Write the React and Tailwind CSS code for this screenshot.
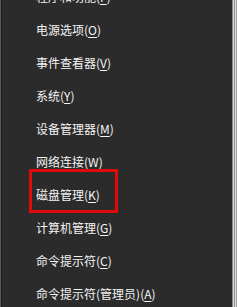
export default function App() {
  const items = [
    ["程序和功能", "F"],
    ["电源选项", "O"],
    ["事件查看器", "V"],
    ["系统", "Y"],
    ["设备管理器", "M"],
    ["网络连接", "W"],
    ["磁盘管理", "K"],
    ["计算机管理", "G"],
    ["命令提示符", "C"],
    ["命令提示符(管理员)", "A"],
  ];
  return (
    <div
      className="flex h-[307px] w-[237px] overflow-hidden"
      style={{ fontFamily: '"Noto Sans CJK SC", "Noto Sans", sans-serif' }}
    >
      <div className="w-[1px] bg-[#5a5a5a]" />
      <div className="w-[1px] bg-[#1c1c1c]" />
      <div className="flex-1 bg-[#2b2b2b] overflow-hidden">
        <div className="mt-[-20px] flex flex-col">
          {items.map(([label, key]) => (
            <div
              key={label + key}
              className="relative flex h-[33px] items-center pl-[34px] text-[12px] leading-none text-[#f4f4f4]"
            >
              <span>
                {label}(<span className="underline underline-offset-2">{key}</span>)
              </span>
              {key === "K" && (
                <div className="pointer-events-none absolute left-[27px] top-[-9px] h-[44px] w-[89px] border-[3px] border-[#e10a0a]" />
              )}
            </div>
          ))}
        </div>
      </div>
      <div className="w-[1px] bg-[#8c8c8c]" />
      <div className="w-[1px] bg-[#d8d8d8]" />
      <div className="w-[1px] bg-[#8f8f8f]" />
      <div className="w-[1px] bg-[#e2e2e2]" />
      <div className="w-[1px] bg-[#a0a0a0]" />
    </div>
  );
}
